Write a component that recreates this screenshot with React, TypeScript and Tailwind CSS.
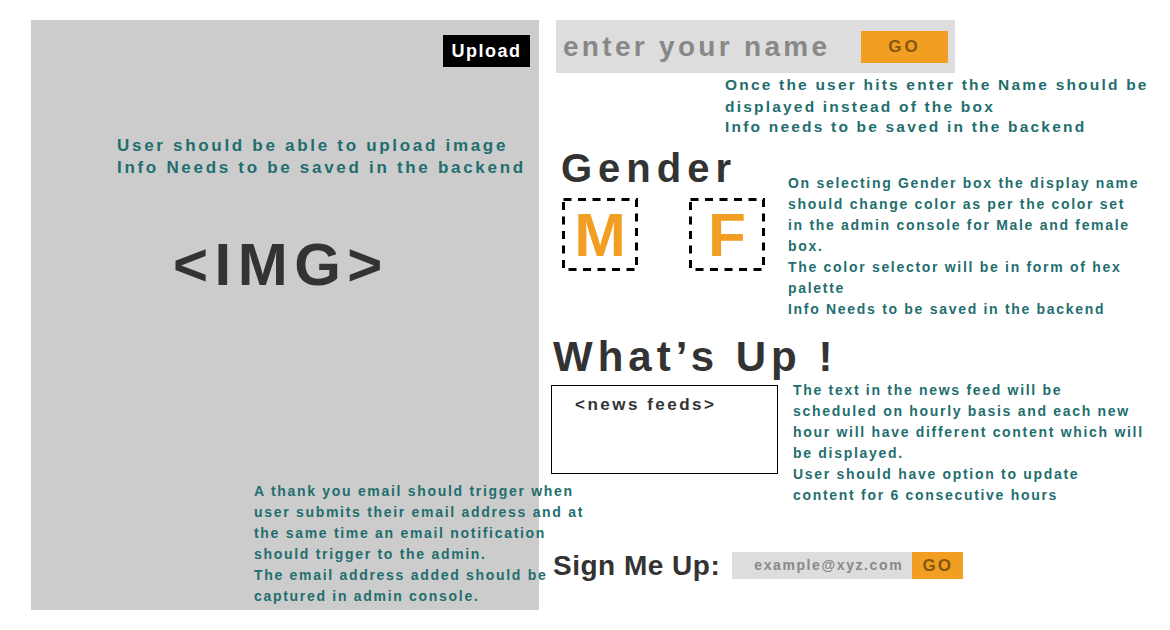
const teal = 'text-[#1f6e6e]';

const GenderBox = ({ letter }: { letter: string }) => (
  <button className="relative flex h-[73px] w-[76px] items-center justify-center text-[62px] leading-none text-[#f29e22]">
    {/* dashed frame drawn so dash length matches the mock */}
    <svg className="absolute inset-0" width="76" height="73" viewBox="0 0 76 73" fill="none">
      <rect x="1.5" y="1.5" width="73" height="70" stroke="black" strokeWidth="3" strokeDasharray="8 6.5" />
    </svg>
    {letter}
  </button>
);

const ImagePanel = () => (
  <section className="flex h-[590px] w-[508px] shrink-0 flex-col bg-[#cccccc]">
    <div className="flex justify-end pr-[9px] pt-[15px]">
      <button className="h-[32px] w-[87px] bg-black text-[18px] tracking-[1.5px] text-white">
        Upload
      </button>
    </div>

    <p className={`ml-[86px] mt-[68px] text-[17px] leading-[22px] tracking-[2.7px] ${teal}`}>
      User should be able to upload image
      <br />
      Info Needs to be saved in the backend
    </p>

    <p className="ml-[142px] mt-[56px] text-[60px] leading-[60px] tracking-[6.5px] text-[#333333]">
      &lt;IMG&gt;
    </p>

    {/* spills over the panel edge on purpose, like the mock */}
    <p className={`ml-[223px] mt-[186px] whitespace-nowrap text-[14px] leading-[21px] tracking-[1.7px] ${teal}`}>
      A thank you email should trigger when
      <br />
      user submits their email address and at
      <br />
      the same time an email notification
      <br />
      should trigger to the admin.
      <br />
      The email address added should be
      <br />
      captured in admin console.
    </p>
  </section>
);

export default function App() {
  return (
    <div className="flex h-[630px] w-[1170px] bg-white pl-[31px] pt-[20px] font-['Liberation_Sans',Arial,sans-serif] font-bold">
      <ImagePanel />

      <div className="ml-[12px] flex w-[610px] flex-col">
        {/* Name */}
        <div className="ml-[5px] flex h-[53px] w-[399px] items-center bg-[#dddddd] px-[7px]">
          <input
            placeholder="enter your name"
            className="min-w-0 flex-1 bg-transparent text-[28px] tracking-[3.3px] text-[#888888] outline-none placeholder:text-[#888888]"
          />
          <button className="h-[32px] w-[87px] bg-[#f29e22] text-[17px] tracking-[3px] text-[#85560f]">
            GO
          </button>
        </div>
        <p className={`mt-[1px] ml-[174px] text-[15.5px] leading-[22px] tracking-[2.2px] ${teal}`}>
          Once the user hits enter the Name should be
          <br />
          displayed instead of the box
        </p>
        <p className={`-mt-[1px] ml-[174px] text-[15.5px] leading-[20px] tracking-[2.2px] ${teal}`}>
          Info needs to be saved in the backend
        </p>

        {/* Gender */}
        <div className="mt-[11px] flex">
          <div className="w-[237px] shrink-0">
            <h2 className="ml-[10px] text-[40px] leading-[40px] tracking-[6px] text-[#333333]">Gender</h2>
            <div className="ml-[11px] mt-[10px] flex gap-[51px]">
              <GenderBox letter="M" />
              <GenderBox letter="F" />
            </div>
          </div>
          <p className={`mt-[24.5px] whitespace-nowrap text-[14px] leading-[21px] tracking-[1.7px] ${teal}`}>
            On selecting Gender box the display name
            <br />
            should change color as per the color set
            <br />
            in the admin console for Male and female
            <br />
            box.
            <br />
            The color selector will be in form of hex
            <br />
            palette
            <br />
            Info Needs to be saved in the backend
          </p>
        </div>

        {/* What's up */}
        <h2 className="ml-[2px] mt-[16.5px] text-[42px] leading-[42px] tracking-[5px] text-[#333333]">
          What’s Up !
        </h2>
        <div className="mt-[1.5px] flex items-start">
          <div className="mt-[5.5px] h-[89px] w-[227px] shrink-0 border border-black pl-[23px] pt-[9px] text-[17px] leading-[20px] tracking-[2.5px] text-[#333333]">
            &lt;news feeds&gt;
          </div>
          <p className={`ml-[15px] whitespace-nowrap text-[14px] leading-[21px] tracking-[1.7px] ${teal}`}>
            The text in the news feed will be
            <br />
            scheduled on hourly basis and each new
            <br />
            hour will have different content which will
            <br />
            be displayed.
            <br />
            User should have option to update
            <br />
            content for 6 consecutive hours
          </p>
        </div>

        {/* Sign up */}
        <div className="mt-[46.5px] flex items-center">
          <h2 className="ml-[2px] text-[28px] leading-[27px] tracking-[0.5px] text-[#333333]">Sign Me Up:</h2>
          <div className="ml-[12px] flex h-[27px]">
            <input
              placeholder="example@xyz.com"
              className="w-[180px] bg-[#dddddd] pl-[22px] text-[14px] tracking-[1.6px] text-[#888888] outline-none placeholder:text-[#888888]"
            />
            <button className="w-[51px] bg-[#f29e22] text-[17px] tracking-[2px] text-[#85560f]">GO</button>
          </div>
        </div>
      </div>
    </div>
  );
}
